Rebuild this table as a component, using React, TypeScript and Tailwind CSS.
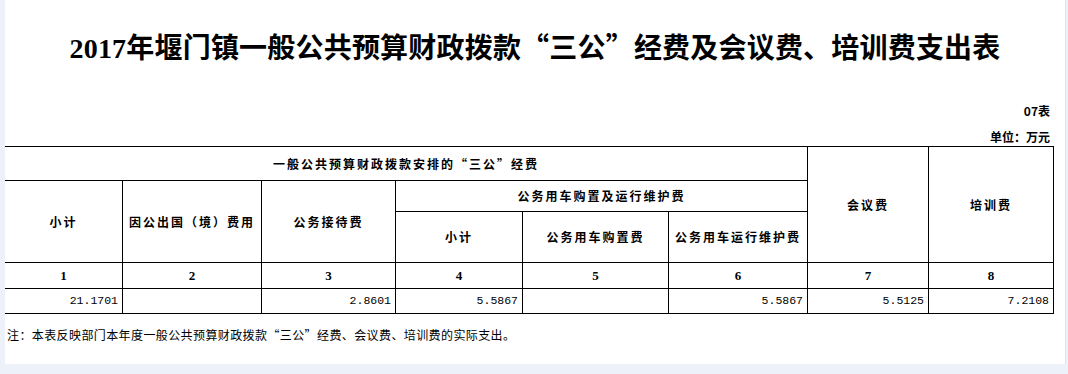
const cjk = "font-['Noto_Sans_CJK_SC',sans-serif]";

function HeadCell({ children, className = "" }: { children?: React.ReactNode; className?: string }) {
  return (
    <div className={`flex items-center justify-center border-r border-b border-black text-[12px] font-bold tracking-[2px] text-black ${className}`}>
      {children}
    </div>
  );
}

function NumCell({ children }: { children: React.ReactNode }) {
  return (
    <div className="flex items-center justify-center border-r border-b border-black font-['Liberation_Serif',serif] text-[13px] font-bold text-black">
      {children}
    </div>
  );
}

function DataCell({ value }: { value?: string }) {
  return (
    <div className="flex items-center justify-end border-r border-b border-black pr-[4px] font-['Liberation_Mono',monospace] text-[11.5px] text-black">
      {value}
    </div>
  );
}

const numbers = ["1", "2", "3", "4", "5", "6", "7", "8"];
const values = ["21.1701", "", "2.8601", "5.5867", "", "5.5867", "5.5125", "7.2108"];

export default function App() {
  return (
    <div className={`h-[374px] w-full bg-[#edf1f9] ${cjk}`}>
      <div className="ml-[5px] h-[364px] w-[1061px] border-r border-[#dfe4ee] bg-white">
        {/* title */}
        <div className="flex h-[94px] items-center justify-center">
          <h1 className="font-['Liberation_Serif','Noto_Sans_CJK_SC',serif] text-[28px] font-bold tracking-[0.2px] text-black">
            2017年堰门镇一般公共预算财政拨款<span className="font-['Noto_Sans_CJK_SC',sans-serif]">“</span>三公
            <span className="font-['Noto_Sans_CJK_SC',sans-serif]">”</span>经费及会议费、培训费支出表
          </h1>
        </div>

        <div className="flex h-[34px] items-center justify-end pr-[15px] text-[12px] font-bold">07表</div>
        <div className="flex h-[18px] items-center justify-end pr-[15px] text-[12px] font-bold">单位：万元</div>

        {/* table */}
        <div className="grid w-[1049px] grid-cols-[118px_139px_134px_127px_146px_139px_121px_125px] grid-rows-[34px_31px_51px_26px_25px] border-t border-black">
          <HeadCell className="col-span-6">一般公共预算财政拨款安排的“三公”经费</HeadCell>
          <HeadCell className="row-span-3">会议费</HeadCell>
          <HeadCell className="row-span-3">培训费</HeadCell>
          <HeadCell className="row-span-2">小计</HeadCell>
          <HeadCell className="row-span-2">因公出国（境）费用</HeadCell>
          <HeadCell className="row-span-2">公务接待费</HeadCell>
          <HeadCell className="col-span-3">公务用车购置及运行维护费</HeadCell>
          <HeadCell>小计</HeadCell>
          <HeadCell>公务用车购置费</HeadCell>
          <HeadCell>公务用车运行维护费</HeadCell>
          {numbers.map((n) => (
            <NumCell key={n}>{n}</NumCell>
          ))}
          {values.map((v, i) => (
            <DataCell key={i} value={v} />
          ))}
        </div>

        <p className="mt-[12px] pl-[2px] text-[12px] tracking-[0.4px] text-black">
          注：本表反映部门本年度一般公共预算财政拨款“三公”经费、会议费、培训费的实际支出。
        </p>
      </div>
    </div>
  );
}
